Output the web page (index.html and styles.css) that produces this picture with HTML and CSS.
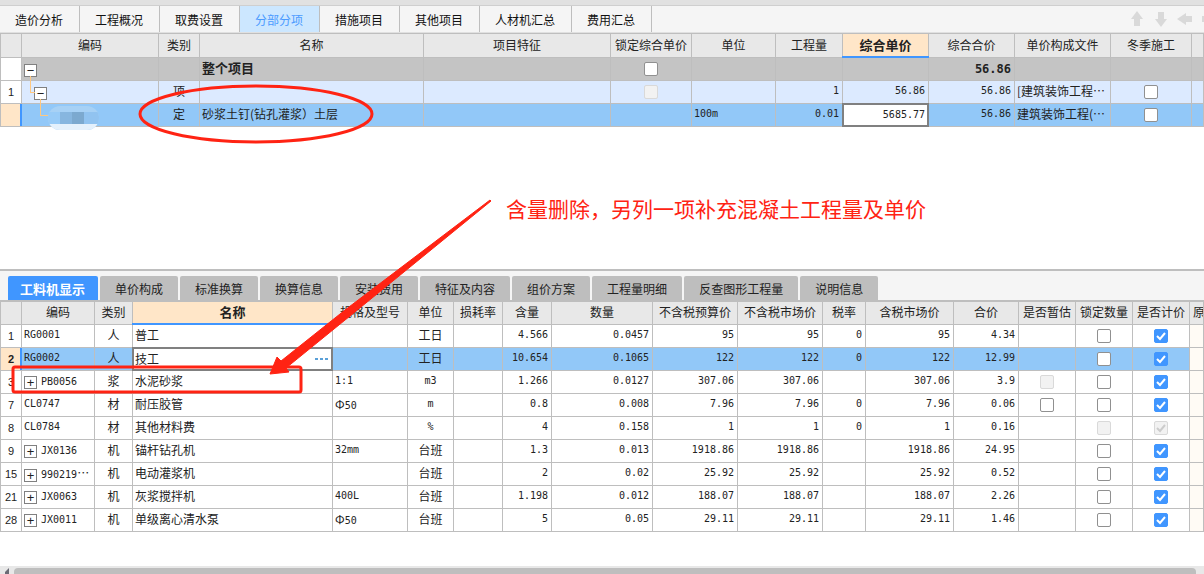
FILE: index.html
```html
<!DOCTYPE html>
<html lang="zh-CN">
<head>
<meta charset="utf-8">
<title>分部分项</title>
<link rel="stylesheet" href="styles.css">
</head>
<body>
<main class="pane-top">
  <div class="strip"></div>
  <nav class="tabs">
    <button class="tab">造价分析</button><button class="tab">工程概况</button><button class="tab">取费设置</button><button class="tab active">分部分项</button><button class="tab">措施项目</button><button class="tab">其他项目</button><button class="tab">人材机汇总</button><button class="tab">费用汇总</button>
    <div class="tools">
      <button aria-label="上移"><svg width="16" height="16"><path d="M8 0L14 8H11V15H5V8H2Z"/></svg></button>
      <button aria-label="下移"><svg width="16" height="16"><path d="M8 16L14 8H11V1H5V8H2Z"/></svg></button>
      <button aria-label="左移"><svg width="16" height="16"><path d="M0 8L9 2V5H15V11H9V14Z"/></svg></button>
      <button aria-label="右移"><svg width="16" height="16"><path d="M16 8L7 2V5H1V11H7V14Z"/></svg></button>
    </div>
  </nav>
  <table class="grid">
    <colgroup><col class="w21"><col class="w137"><col class="w41"><col class="w224"><col class="w187"><col class="w81"><col class="w84"><col class="w67"><col class="w86"><col class="w86"><col class="w96"><col class="w81"><col></colgroup>
    <thead><tr><th></th><th>编码</th><th>类别</th><th>名称</th><th>项目特征</th><th>锁定综合单价</th><th>单位</th><th>工程量</th><th class="current">综合单价</th><th>综合合价</th><th>单价构成文件</th><th>冬季施工</th><th></th></tr></thead>
    <tbody>
      <tr class="total"><td class="idx"></td><td class="tree"><button class="node" aria-label="折叠">−</button></td><td></td><td class="strong">整个项目</td><td></td><td class="c"><input type="checkbox" aria-label="锁定综合单价"></td><td></td><td></td><td></td><td class="r strong"><span class="num">56.86</span></td><td></td><td></td><td></td></tr>
      <tr class="group"><td class="idx">1</td><td class="tree branch level1"><button class="node" aria-label="折叠">−</button></td><td class="c">项</td><td></td><td></td><td class="c"><input type="checkbox" aria-label="锁定综合单价" disabled></td><td></td><td class="r num">1</td><td class="r num">56.86</td><td class="r num">56.86</td><td>[建筑装饰工程…</td><td class="c"><input type="checkbox" aria-label="冬季施工"></td><td></td></tr>
      <tr class="selected"><td class="idx mark"></td><td class="tree branch level2"></td><td class="c">定</td><td>砂浆土钉(钻孔灌浆）土层</td><td></td><td></td><td class="num">100m</td><td class="r num">0.01</td><td class="edit"><input class="value num r" aria-label="综合单价" value="5685.77"></td><td class="r num">56.86</td><td>建筑装饰工程(…</td><td class="c"><input type="checkbox" aria-label="冬季施工"></td><td></td></tr>
    </tbody>
  </table>
</main>
<section class="pane-bottom">
  <nav class="subtabs">
    <button class="subtab active">工料机显示</button><button class="subtab">单价构成</button><button class="subtab">标准换算</button><button class="subtab">换算信息</button><button class="subtab">安装费用</button><button class="subtab">特征及内容</button><button class="subtab">组价方案</button><button class="subtab">工程量明细</button><button class="subtab">反查图形工程量</button><button class="subtab">说明信息</button>
  </nav>
  <table class="grid detail">
    <colgroup><col class="w21"><col class="w73"><col class="w38"><col class="w200"><col class="w75"><col class="w46"><col class="w49"><col class="w49"><col class="w101"><col class="w85"><col class="w85"><col class="w43"><col class="w88"><col class="w65"><col class="w57"><col class="w57"><col class="w57"><col></colgroup>
    <thead><tr><th></th><th>编码</th><th>类别</th><th class="current">名称</th><th>规格及型号</th><th>单位</th><th>损耗率</th><th>含量</th><th>数量</th><th>不含税预算价</th><th>不含税市场价</th><th>税率</th><th>含税市场价</th><th>合价</th><th>是否暂估</th><th>锁定数量</th><th>是否计价</th><th class="cut">原</th></tr></thead>
    <tbody>
      <tr><td class="idx">1</td><td class="num">RG0001</td><td class="c">人</td><td>普工</td><td></td><td class="c">工日</td><td></td><td class="r num">4.566</td><td class="r num">0.0457</td><td class="r num">95</td><td class="r num">95</td><td class="r num">0</td><td class="r num">95</td><td class="r num">4.34</td><td></td><td class="c"><input type="checkbox" aria-label="锁定数量"></td><td class="c"><input type="checkbox" aria-label="是否计价" checked></td><td class="warm"></td></tr>
      <tr class="selected"><td class="idx mark strong">2</td><td class="num">RG0002</td><td class="c">人</td><td class="edit"><div class="picker"><input class="value" aria-label="名称" value="技工"><button class="more" aria-label="选择"><i></i><i></i><i></i></button></div></td><td></td><td class="c">工日</td><td></td><td class="r num">10.654</td><td class="r num">0.1065</td><td class="r num">122</td><td class="r num">122</td><td class="r num">0</td><td class="r num">122</td><td class="r num">12.99</td><td></td><td class="c"><input type="checkbox" aria-label="锁定数量"></td><td class="c"><input type="checkbox" aria-label="是否计价" checked></td><td class="warm"></td></tr>
      <tr><td class="idx">3</td><td class="num tree"><button class="node" aria-label="展开">+</button>PB0056</td><td class="c">浆</td><td>水泥砂浆</td><td class="num">1:1</td><td class="c num">m3</td><td></td><td class="r num">1.266</td><td class="r num">0.0127</td><td class="r num">307.06</td><td class="r num">307.06</td><td></td><td class="r num">307.06</td><td class="r num">3.9</td><td class="c"><input type="checkbox" aria-label="是否暂估" disabled></td><td class="c"><input type="checkbox" aria-label="锁定数量"></td><td class="c"><input type="checkbox" aria-label="是否计价" checked></td><td class="warm"></td></tr>
      <tr><td class="idx">7</td><td class="num">CL0747</td><td class="c">材</td><td>耐压胶管</td><td>Φ<span class="num">50</span></td><td class="c num">m</td><td></td><td class="r num">0.8</td><td class="r num">0.008</td><td class="r num">7.96</td><td class="r num">7.96</td><td class="r num">0</td><td class="r num">7.96</td><td class="r num">0.06</td><td class="c"><input type="checkbox" aria-label="是否暂估"></td><td class="c"><input type="checkbox" aria-label="锁定数量"></td><td class="c"><input type="checkbox" aria-label="是否计价" checked></td><td class="warm"></td></tr>
      <tr><td class="idx">8</td><td class="num">CL0784</td><td class="c">材</td><td>其他材料费</td><td></td><td class="c num">%</td><td></td><td class="r num">4</td><td class="r num">0.158</td><td class="r num">1</td><td class="r num">1</td><td class="r num">0</td><td class="r num">1</td><td class="r num">0.16</td><td></td><td class="c"><input type="checkbox" aria-label="锁定数量" disabled></td><td class="c"><input type="checkbox" aria-label="是否计价" checked disabled></td><td class="warm"></td></tr>
      <tr><td class="idx">9</td><td class="num tree"><button class="node" aria-label="展开">+</button>JX0136</td><td class="c">机</td><td>锚杆钻孔机</td><td class="num">32mm</td><td class="c">台班</td><td></td><td class="r num">1.3</td><td class="r num">0.013</td><td class="r num">1918.86</td><td class="r num">1918.86</td><td></td><td class="r num">1918.86</td><td class="r num">24.95</td><td></td><td class="c"><input type="checkbox" aria-label="锁定数量"></td><td class="c"><input type="checkbox" aria-label="是否计价" checked></td><td class="warm"></td></tr>
      <tr><td class="idx">15</td><td class="tree"><button class="node" aria-label="展开">+</button><span class="num">990219</span>…</td><td class="c">机</td><td>电动灌浆机</td><td></td><td class="c">台班</td><td></td><td class="r num">2</td><td class="r num">0.02</td><td class="r num">25.92</td><td class="r num">25.92</td><td></td><td class="r num">25.92</td><td class="r num">0.52</td><td></td><td class="c"><input type="checkbox" aria-label="锁定数量"></td><td class="c"><input type="checkbox" aria-label="是否计价" checked></td><td class="warm"></td></tr>
      <tr><td class="idx">21</td><td class="num tree"><button class="node" aria-label="展开">+</button>JX0063</td><td class="c">机</td><td>灰浆搅拌机</td><td class="num">400L</td><td class="c">台班</td><td></td><td class="r num">1.198</td><td class="r num">0.012</td><td class="r num">188.07</td><td class="r num">188.07</td><td></td><td class="r num">188.07</td><td class="r num">2.26</td><td></td><td class="c"><input type="checkbox" aria-label="锁定数量"></td><td class="c"><input type="checkbox" aria-label="是否计价" checked></td><td class="warm"></td></tr>
      <tr><td class="idx">28</td><td class="num tree"><button class="node" aria-label="展开">+</button>JX0011</td><td class="c">机</td><td>单级离心清水泵</td><td>Φ<span class="num">50</span></td><td class="c">台班</td><td></td><td class="r num">5</td><td class="r num">0.05</td><td class="r num">29.11</td><td class="r num">29.11</td><td></td><td class="r num">29.11</td><td class="r num">1.46</td><td></td><td class="c"><input type="checkbox" aria-label="锁定数量"></td><td class="c"><input type="checkbox" aria-label="是否计价" checked></td><td class="warm"></td></tr>
    </tbody>
  </table>
</section>
<div class="scroll"><svg width="14" height="8"><path d="M9 2V8H5V6Z" fill="#6b6b75"/></svg><div class="thumb"></div></div>

<svg class="marks" width="1204" height="574" aria-hidden="true">
  <clipPath id="blob"><rect x="48" y="106" width="51" height="24" rx="12"/></clipPath>
  <g clip-path="url(#blob)">
    <rect x="48" y="106" width="51" height="24" fill="#a7d1f5"/>
    <rect x="48" y="112" width="12" height="12" fill="#98cbf7"/>
    <rect x="60" y="112" width="12" height="12" fill="#87b6df"/>
    <rect x="72" y="112" width="12" height="12" fill="#7ca9cf"/>
    <rect x="84" y="112" width="15" height="12" fill="#91c3f0"/>
    <rect x="48" y="124" width="51" height="6" fill="#e5f1fc"/>
  </g>
  <g fill="none" stroke="#ff2313" stroke-width="3">
    <ellipse cx="256" cy="114" rx="116" ry="28"/>
    <rect x="13" y="367" width="288" height="25" rx="2"/>
  </g>
  <path d="M270 374L277 357L281 361L345 310L490 200L491 201L350 316L286 368L289 372Z" fill="#ff2313" stroke="#ff2313" stroke-linejoin="round"/>
</svg>
<p class="note">含量删除，另列一项补充混凝土工程量及单价</p>
</body>
</html>
```
FILE: styles.css
```css
* { box-sizing: border-box; }
body {
  margin: 0;
  height: 100vh;
  display: flex;
  flex-direction: column;
  position: relative;
  overflow: hidden;
  background: #fff;
  color: #222;
  font: 12px/18px "Noto Sans CJK SC", sans-serif;
}
button, input { font: inherit; color: inherit; margin: 0; padding: 0; border: 0; background: none; }

/* upper pane */
.pane-top { flex: 1; }
.strip { height: 6px; background: #e1e1e1; border-bottom: 1px solid #cfcfcf; }
.tabs { display: flex; height: 27px; background: #f5f5f5; border-bottom: 1px solid #e0e0e0; overflow: hidden; }
.tab { padding: 2px 16px 0 15px; border-right: 1px solid #bebebe; color: #111; white-space: nowrap; }
.tab.active { background: #cce7ff; color: #4b9bff; }
.tools { display: flex; margin-left: auto; margin-right: -17px; }
.tools button { width: 24px; display: flex; align-items: center; justify-content: center; }
.tools svg { fill: #d9d9d9; }

/* data grids */
.grid { width: 100%; table-layout: fixed; border-collapse: separate; border-spacing: 0; border-left: 1px solid #bebebe; }
.pane-top .grid { border-top: 1px solid #bebebe; }
.grid th, .grid td {
  height: 23px;
  padding: 0 2px 2px;
  border-right: 1px solid #bebebe;
  border-bottom: 1px solid #bebebe;
  text-align: left;
  vertical-align: middle;
  white-space: nowrap;
  overflow: hidden;
  font-weight: 400;
}
.grid th { padding: 0 0 2px; background: #e8e8e8; text-align: center; }
.pane-top .grid th { height: 24px; }
.grid th.cut { text-align: left; padding-left: 3px; }
.grid th.current { position: relative; overflow: visible; background: #ffe6c8; font-size: 13px; font-weight: 700; }
.grid th.current::after { content: ""; position: absolute; left: -1px; right: -1px; bottom: -1px; height: 2px; background: #4096ff; }
.grid .c { text-align: center; }
.grid .r { text-align: right; padding-right: 3px; }
.grid .num { font-family: "DejaVu Sans Mono", "Noto Sans CJK SC", monospace; font-size: 10px; line-height: 12px; }
.grid .strong { font-size: 13px; font-weight: 700; }
.grid .strong .num { font-size: 12px; }
.grid .idx { padding: 0; text-align: center; background: #fff; font-family: "Liberation Sans", sans-serif; font-size: 11px; }
.grid .idx.mark { position: relative; overflow: visible; background: #ffe6c8; }
.idx.mark::after { content: ""; position: absolute; top: 0; bottom: 0; right: -1px; width: 2px; background: #4096ff; }
.total td { background: #c4c4c4; }
.group td { background: #dceaff; }
.selected td { background: #92c8f8; }
.grid .warm { background: #fffbf5; }

.grid .edit { position: relative; overflow: visible; padding: 0; background: #fff; }
.edit::after { content: ""; position: absolute; inset: -1px; border: 2px solid #808080; pointer-events: none; }
.value { display: block; width: 100%; height: 22px; padding: 0 2px 2px; }
.picker { display: flex; }
.more { display: flex; align-items: center; gap: 2px; padding: 0 4px; }
.more i { width: 3px; height: 2px; background: #5aa0d8; }

.node {
  width: 13px;
  height: 13px;
  margin-right: 4px;
  border: 1px solid #808080;
  background: #fff;
  color: #222;
  font: 13px/11px "Liberation Sans", sans-serif;
  text-align: center;
  vertical-align: middle;
}
.grid .tree { line-height: 14px; padding-bottom: 0; }
.grid .branch { position: relative; overflow: visible; }
.grid .level1 { padding-left: 12px; }
.branch::before { content: ""; position: absolute; top: -5px; height: 16px; border-left: 1px solid #ffc880; border-bottom: 1px solid #ffc880; }
.level1::before { left: 8px; width: 4px; }
.level2::before { left: 18px; width: 7px; }

.grid td:has(input[type="checkbox"]) { padding-bottom: 0; }
input[type="checkbox"] {
  appearance: none;
  display: block;
  width: 14px;
  height: 14px;
  margin: 0 auto;
  border: 1px solid #909090;
  border-radius: 2px;
  background: #fff center / 12px 12px no-repeat;
}
input[type="checkbox"]:checked {
  border-color: #4096ff;
  background-color: #4096ff;
  background-image: url("data:image/svg+xml,%3Csvg xmlns='http://www.w3.org/2000/svg' viewBox='0 0 12 12'%3E%3Cpath d='M2 6l3 3 5-6' fill='none' stroke='white' stroke-width='2'/%3E%3C/svg%3E");
}
input[type="checkbox"]:disabled { border-color: #d9d9d9; background-color: #f2f2f2; }
input[type="checkbox"]:checked:disabled {
  background-image: url("data:image/svg+xml,%3Csvg xmlns='http://www.w3.org/2000/svg' viewBox='0 0 12 12'%3E%3Cpath d='M2 6l3 3 5-6' fill='none' stroke='%23cccccc' stroke-width='2'/%3E%3C/svg%3E");
}

/* lower pane */
.pane-bottom { padding-bottom: 34px; border-top: 2px solid #bebebe; }
.subtabs { display: flex; gap: 2px; padding: 5px 8px 0; background: #f5f5f5; border-bottom: 2px solid #bebebe; }
.subtab { height: 24px; padding: 2px 15px 0; border-radius: 2px 2px 0 0; background: #bebebe; white-space: nowrap; }
.subtab.active { padding: 2px 13px 0 12px; background: #4096ff; color: #fff; font-size: 13px; font-weight: 700; }

.scroll { display: flex; height: 8px; padding-right: 8px; background: #e8e8e8; }
.thumb { flex: 1; margin-top: 2px; border-radius: 4px 4px 0 0; background: #bebebe; }

/* annotations lying over the grids */
.marks { position: absolute; left: 0; top: 0; pointer-events: none; }
.note { position: absolute; left: 506px; top: 193px; margin: 0; color: #ff2313; font-size: 21px; line-height: 30px; white-space: nowrap; }

.w21 { width: 21px; }
.w38 { width: 38px; }
.w41 { width: 41px; }
.w43 { width: 43px; }
.w46 { width: 46px; }
.w49 { width: 49px; }
.w57 { width: 57px; }
.w65 { width: 65px; }
.w67 { width: 67px; }
.w73 { width: 73px; }
.w75 { width: 75px; }
.w81 { width: 81px; }
.w84 { width: 84px; }
.w85 { width: 85px; }
.w86 { width: 86px; }
.w88 { width: 88px; }
.w96 { width: 96px; }
.w101 { width: 101px; }
.w137 { width: 137px; }
.w187 { width: 187px; }
.w200 { width: 200px; }
.w224 { width: 224px; }
```
